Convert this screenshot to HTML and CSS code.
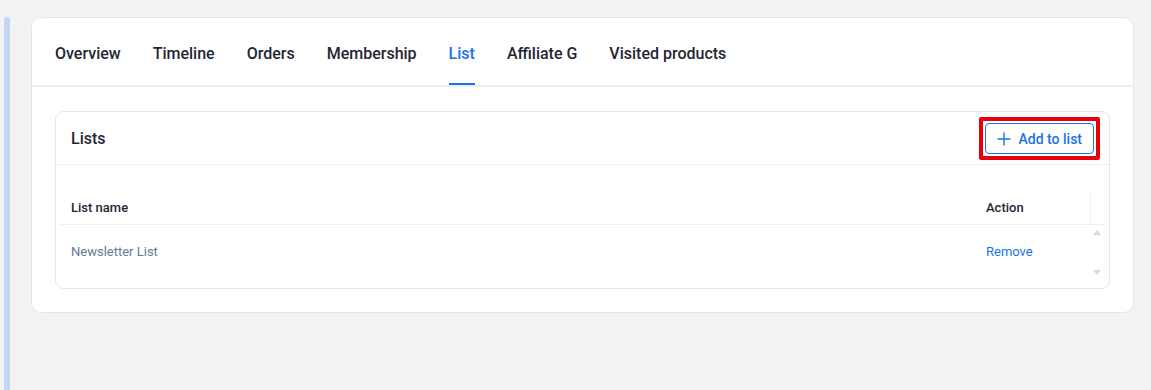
FILE: index.html
```html
<!DOCTYPE html>
<html>
<head>
<meta charset="utf-8">
<link rel="stylesheet" href="styles.css">
</head>
<body>
<div class="page">
  <div class="strip"></div>
  <main class="card">
    <nav class="tabs">
      <span class="tab">Overview</span>
      <span class="tab">Timeline</span>
      <span class="tab">Orders</span>
      <span class="tab">Membership</span>
      <span class="tab active">List</span>
      <span class="tab">Affiliate G</span>
      <span class="tab">Visited products</span>
    </nav>
    <section class="card-body">
      <div class="panel">
        <div class="panel-head">
          <h2 class="panel-title">Lists</h2>
          <span class="highlight">
            <button class="add-btn">
              <svg class="plus" width="14" height="14" viewBox="0 0 14 14"><path d="M7 0.5v13M0.5 7h13" stroke="currentColor" stroke-width="1.4" fill="none"/></svg>
              <span>Add to list</span>
            </button>
          </span>
        </div>
        <div class="table">
          <div class="thead">
            <div class="th col-name">List name</div>
            <div class="th col-action">Action</div>
            <div class="th col-scroll"></div>
          </div>
          <div class="tbody">
            <div class="rows">
              <div class="tr">
                <div class="td col-name muted">Newsletter List</div>
                <div class="td col-action"><a class="link">Remove</a></div>
              </div>
            </div>
            <div class="scrollbar">
              <span class="arrow up"></span>
              <span class="arrow down"></span>
            </div>
          </div>
        </div>
      </div>
    </section>
  </main>
</div>
</body>
</html>
```

FILE: styles.css
```css
* { box-sizing: border-box; }
html, body { margin: 0; padding: 0; }
body {
  background: #f3f3f3;
  font-family: Roboto, "Liberation Sans", Arial, sans-serif;
  color: #1f2633;
  height: 390px;
  overflow: hidden;
}
.page {
  display: flex;
  align-items: flex-start;
  padding-top: 17px;
  height: 390px;
}
.strip {
  width: 6px;
  margin-left: 4px;
  align-self: stretch;
  background: #c3d6f6;
  border-radius: 3px 3px 0 0;
}
.card {
  margin-left: 21px;
  width: 1103px;
  background: #fff;
  border: 1px solid #e6e6e6;
  border-radius: 10px;
}
.tabs {
  display: flex;
  gap: 32px;
  padding: 0 23px;
  border-bottom: 2px solid #efefef;
}
.tab {
  font-size: 16px;
  font-weight: 500;
  line-height: 24px;
  padding: 24px 0 17px;
  border-bottom: 2px solid transparent;
  color: #1f2633;
}
.tab.active {
  color: #1a6ff5;
  border-bottom-color: #1a6ff5;
}
.card-body {
  padding: 24px 23px 23px;
}
.panel {
  border: 1px solid #e8e8e8;
  border-radius: 8px;
}
.panel-head {
  display: flex;
  align-items: center;
  justify-content: space-between;
  height: 53px;
  padding: 0 9px 0 15px;
  border-bottom: 1px solid #eeeeee;
}
.panel-title {
  margin: 0;
  font-size: 16px;
  font-weight: 500;
  color: #1f2633;
}
.highlight {
  display: block;
  border: 4px solid #e8000b;
  border-radius: 2px;
  padding: 2px;
  margin-top: 1px;
}
.add-btn {
  display: flex;
  align-items: center;
  gap: 8px;
  height: 31px;
  padding: 0 11px 0 11px;
  background: #fff;
  border: 1px solid #1a73e8;
  border-radius: 4px;
  color: #1a73e8;
  font-family: inherit;
  font-size: 14px;
  font-weight: 500;
}
.plus { display: block; }
.table {
  padding: 25px 5px 10px;
}
.thead {
  display: flex;
  height: 35px;
  align-items: stretch;
  border-bottom: 1px solid #eeeeee;
}
.th {
  font-size: 13px;
  font-weight: 500;
  display: flex;
  align-items: center;
  padding-left: 10px;
  color: #1f2633;
}
.col-name { flex: 1; }
.col-action { width: 114px; }
.th.col-scroll {
  width: 14px;
  padding: 0;
  border-left: 1px solid #f0f0f0;
}
.tbody {
  display: flex;
  height: 53px;
}
.rows { flex: 1; }
.tr {
  display: flex;
  height: 51px;
  padding-top: 1px;
  align-items: center;
}
.td {
  font-size: 13px;
  padding-left: 10px;
}
.muted { color: #6b7894; }
.link { color: #1a73e8; cursor: pointer; }
.scrollbar {
  width: 14px;
  display: flex;
  flex-direction: column;
  justify-content: space-between;
  align-items: center;
  padding: 5px 0 3px;
}
.arrow {
  width: 0;
  height: 0;
  border-left: 4px solid transparent;
  border-right: 4px solid transparent;
}
.arrow.up { border-bottom: 5px solid #d9d9d9; }
.arrow.down { border-top: 5px solid #d9d9d9; }
```
